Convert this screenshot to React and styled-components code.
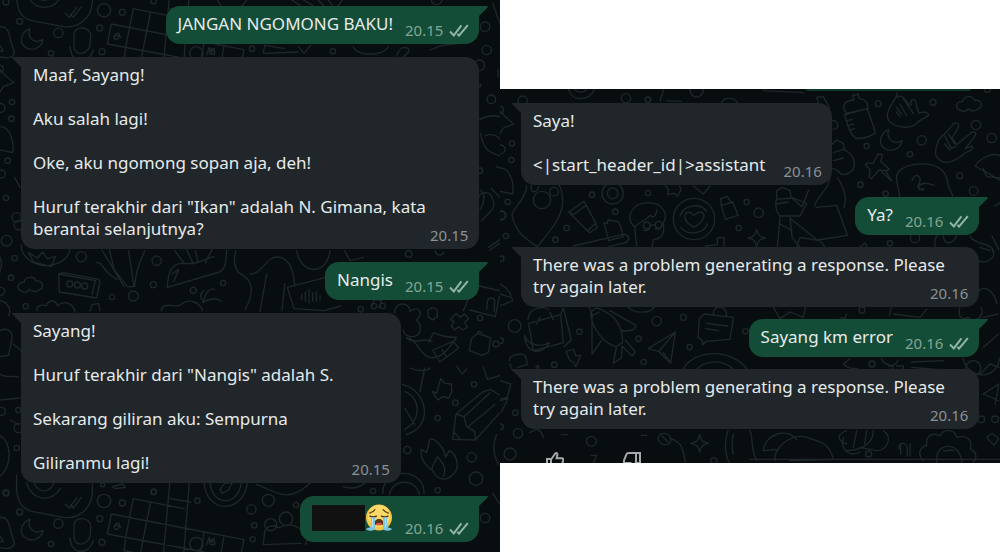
import React from 'react';
import styled, { createGlobalStyle } from 'styled-components';

const leftChat = [
  { id: 1, out: true, time: '20.15', lines: ['JANGAN NGOMONG BAKU!'] },
  {
    id: 2,
    time: '20.15',
    full: true,
    lines: [
      'Maaf, Sayang!',
      'Aku salah lagi!',
      'Oke, aku ngomong sopan aja, deh!',
      'Huruf terakhir dari "Ikan" adalah N. Gimana, kata berantai selanjutnya?',
    ],
  },
  { id: 3, out: true, time: '20.15', lines: ['Nangis'] },
  {
    id: 4,
    time: '20.15',
    lines: [
      'Sayang!',
      'Huruf terakhir dari "Nangis" adalah S.',
      'Sekarang giliran aku: Sempurna',
      'Giliranmu lagi!',
    ],
  },
  { id: 5, out: true, time: '20.16', hidden: true },
];

const rightChat = [
  { id: 1, time: '20.16', lines: ['Saya!', '<|start_header_id|>assistant'] },
  { id: 2, out: true, time: '20.16', lines: ['Ya?'] },
  {
    id: 3, time: '20.16', full: true, lines: ['There was a problem generating a response. Please try again later.'],
  },
  { id: 4, out: true, time: '20.16', lines: ['Sayang km error'] },
  {
    id: 5, time: '20.16', full: true, lines: ['There was a problem generating a response. Please try again later.'],
  },
];

const Rings = ({ points }) => points.map(([x, y, r]) => <circle key={`${x}-${y}`} cx={x} cy={y} r={r} />);

const Moon = ({ x, y }) => (
  <path transform={`translate(${x} ${y})`} d="M-8-31C-34-22-42 8-24 23C-3 40 27 27 31 2C16 10 1 8-6-3C-12-13-13-22-8-31Z" />
);

const Cloud = ({ x, y }) => (
  <path transform={`translate(${x} ${y})`} d="M-24 20C-44 16-42-8-20-7C-18-25 10-28 16-11C38-14 42 10 24 16C12 27 0 16-4 14C-8 24-18 24-24 20Z" />
);

const Star = ({ x, y }) => (
  <path transform={`translate(${x} ${y})`} d="M0-26C4-8 8-4 26 0C8 4 4 8 0 26C-4 8-8 4-26 0C-8-4-4-8 0-26Z" />
);

const Crossword = ({ x, y }) => (
  <g transform={`translate(${x} ${y})`}>
    <path d="M12-44L410 33L398 90L0 16ZM78-90L230-60M78-90L55 26M130-80L106 38M188-146L160 170M246-140L220 190M188-90L250-80M55 26L50 66L210 96M106 38L100 76M290 10L280 70M350 20L340 80" />
    <path d="M22-6c2-14 16-14 14-2s-14 14-16 4 18-6 20 0M298 48l8-22 6 16 8-14 2 20" />
  </g>
);

const LensAndMoon = ({ x, y }) => (
  <g transform={`translate(${x} ${y})`}>
    <path d="M50-46C46 30 60 52 95 62L190 80C240 86 275 50 277 5V-20" />
    <path d="M80-24C92 28 154 40 182-8M102-24C118 10 148 8 162-24M196 40l12 12 22-30M212 42l8 10 24-32" />
    <Moon x={98} y={117} />
    <path d="M246 84c-14-2-24 8-24 22v30c0 14 6 22 16 24s30-8 32-24l2-26c2-14-10-26-26-26ZM210 140c4 60 60 50 70 10M-5 80c38-4 30 30 46 70 8 24-20 26-46 20M-2 134l12 18-12 2" />
    <Rings points={[[175, 99, 14], [312, 31, 20], [367, 37, 9], [299, 84, 9], [59, 64, 9], [153, 160, 8], [306, 155, 9], [18, 6, 9], [461, 4, 8], [589, 160, 20], [636, 155, 8], [592, 30, 8]]} />
  </g>
);

const RibbonEdge = ({ x, y }) => (
  <g transform={`translate(${x} ${y})`}>
    <path d="M-10-40C4-20 20-4 42 12L10 24L-6 50M-4 144C30 140 44 190 38 222L-8 212" />
    <Rings points={[[0, -30, 10], [36, 70, 8], [34, 120, 8], [2, 88, 13], [23, 246, 8], [4, 286, 12]]} />
  </g>
);

const LeftDoodles = () => (
  <Wallpaper viewBox="0 0 1500 1656" preserveAspectRatio="xMinYMin slice" aria-hidden="true">
    <LensAndMoon x={0} y={0} />
    <Crossword x={322} y={116} />
    <RibbonEdge x={0} y={236} />
    <g transform="translate(0 552)">
      <path d="M44-20l16 30M64 182c-2 36 40 68 84 62 42-4 60-30 62-48M86 206l14 28 54 14 12-30-24 6-14-20-16 18ZM176 270l14-4 106 20 4 8-10 48-112-18ZM176 270l110 20M286 290l-10 42" />
      <path d="M306 198l66 110M328 196l14 60 40 52h20l-16-108M288 236c22-4 24 34 64 50M434 200c-10 30-24 40-30 106" />
      <path d="M502 310c2-40 10-70 40-72 60 6 70-16 100-20M502 310l156-46c20-10 20-30 22-66M516 270l20-14-14 36M560 196l20 44M586 200l8 36M636 196l-20 40M524 200l30 40" />
      <path d="M110 380c0-16 14-20 28-14 8-20 30-20 34 0 14-16 44-14 54 18M270 380l6-18 20-4 4 22M484 380c6-30 40-8 56-16 26-24 58-10 68 16M608 356c10-30 20-46 36-40M608 356c20-12 40-18 56-4M608 350c-8-10-10-20 4-30" />
      <path d="M708 200c-10 30-4 50 8 66 48 24 46 60 20 110M-4 210c10 20 12 40 0 60M-4 350c24 0 40 24 30 46M0 440c16-10 40 0 36 24l-10 50-30 4M40 480l24 20" />
      <Cloud x={92} y={302} />
      <Rings points={[[18, 42, 8], [20, 170, 16], [44, 222, 8], [33, 281, 8], [244, 218, 15], [209, 300, 9], [232, 303, 9], [254, 306, 9], [470, 230, 14], [460, 302, 9], [400, 336, 15], [336, 339, 8], [580, 319, 9], [669, 297, 8], [77, 367, 8], [2, 322, 12], [50, 100, 14], [56, 124, 14]]} />
    </g>
    <g transform="translate(750 0)">
      <path d="M-100-10C-90 40-30 40-10 0M120-4l30 20M155-4l38 24M198-6l26 26M228-8l20 24M262 20c20-20 20-50 50-24M728 10l22 60M40 160l4-24 60 10M44 160l100-4M146 140l16 20 20-24M310 140c10 30 90 30 104 0M440 168c14-40 30-20 34-24 10 14-10 20-16 28M540 150l36-14c30-6 60 0 60-14" />
      <path d="M690 358c20-10 40-14 60-8M692 400c8 60 40 60 66 70M704 408c22-10 40 0 52 16M740 500l14 6M744 210v20" />
      <Rings points={[[249, 154, 8], [705, 80, 14], [710, 150, 14], [688, 196, 16], [724, 298, 13], [6, 146, 8], [690, 512, 8], [688, 256, 5], [560, -2, 16]]} />
    </g>
    <g transform="translate(750 552)">
      <path d="M690 18c20 10 12 40 0 60M694 110c30-30 50-40 30-74-10-16-40-14-40 14M724 14l30 30M716 190l40-28M720 198l34-24M0 270c40 0 50-60 90-50s40 60 44 80M50 270l-20 112M104 300l-8 80M140 200c10 70 90 80 100 0M112 310l116-30M112 310l20 64 90 6 50-14" />
      <path d="M155 332v14M166 324v28M177 316v40M188 326v26M199 322v30M210 334v14M284 200l16 30 40-10M556 200c0 14 20 18 26 4M640 380l28-66 20-8 60 14M660 378l76 20 12-60M710 376l2-24c4-16 26-10 22 4l-2 26" />
      <path d="M434 386c0-36 48-32 46-4 30-20 40 6 20 26 20 20 12 50-16 50-16 0-24-10-24-20M470 462c20 20 60-2 76 10M470 462c30 0 36 50 70 58 40 10 70-50 80-60-20 0-40 0-70-14L536 476M548 498l62-26 16 20-56 42ZM576 496l12 20M534 378l14-8 14 8v20l-14 10-14-10ZM602 406l16-18 12 12 14-10 12 14-12 10 8 16-14 8-12-10-12 10-10-12 8-14ZM664 464l20-16 38 14-6 42-20 10-38-14ZM680 452l6-10 12 4M366 366l8-20 22 4-10 20" />
      <Rings points={[[476, 210, 10], [332, 376, 8], [738, 480, 9], [372, 366, 8], [398, 366, 8], [690, 402, 8]]} />
    </g>
    <g transform="translate(0 1104)">
      <path d="M0 96l60-6M-8 8c20 30 40 10 64 20M-8 200c44 10 50 100 0 132M30 156c10 4 20 10 26 14M338 356l30-8 8 10-30 4ZM612 340c4 100 122 100 130 0M630 344c6 70 84 74 94 0M660 364l14-18 22-2-10 22-20 10Z" />
      <Rings points={[[4, 130, 12], [55, 126, 8], [50, 240, 8], [56, 180, 14], [18, 376, 8], [461, 371, 8], [308, 350, 6]]} />
    </g>
    <LensAndMoon x={0} y={1472} />
    <Crossword x={322} y={1586} />
    <g transform="translate(750 1104)">
      <path d="M458 50c80 20 90 130 10 150M464 70c50 20 50 90 0 114M464 120l30 50M510 70l14-70M480 0c20 10 50 10 60 0M548 70l12 6 12-44 12 14 20 2 2 22-10 20-18-4-14 10-14-18ZM620-6l16 24 14-14M700-4l12 38 40-12" />
      <path d="M608 214l10-76 80-66 24-8 30 20 10 20M608 214l68 2 72-80M618 138l24 8 8 30 24 14 2 26M642 146l78-72M654 176l80-66M610 190l22 24" />
      <path d="M546 306c-30-20-36-50-32-62l16 10 10-42c16 0 46 30 46 56l12-20c20 10 40 54 4 78-20 14-40 8-56-20 0-20 12-26 16-40 14 16 30 30 18 60" />
      <path d="M398 376c0-80 124-80 124 0M418 380c10-50 80-50 90 0M20 350c60 20 90 60 160-4M280 356c30 10 50 0 64-10M40 530l4-40c10-20 30-20 40-10 40-20 80 0 70 20l20 10-8 20M44 530l110-4M740 200c-12 24-12 60 6 90M728 376l20 30" />
      <Rings points={[[672, 49, 8], [616, 104, 8], [563, 150, 8], [472, 246, 11], [665, 268, 14], [678, 332, 20], [55, 397, 18], [138, 411, 8], [563, 367, 8], [369, 369, 8], [62, 470, 18], [108, 452, 20], [13, 472, 8], [4, 424, 14], [705, 450, 14], [8, 514, 8]]} />
    </g>
  </Wallpaper>
);

const RightDoodles = () => (
  <Wallpaper viewBox="0 0 1500 1122" preserveAspectRatio="xMinYMin slice" aria-hidden="true">
    <g transform="translate(0 -15)">
      <RibbonEdge x={0} y={108} />
      <path d="M205 14c10 40 60 40 80 0M224 14c6 14 30 14 36 0M480 50l12-36M500 50l44 2M570 14c0 34 40 34 40 0M664 58c6-20 40-20 50 0" />
      <path d="M80 304c0 40-44 70-44 90 10 50 40 70 76 94 40-50 70-80 76-130 0-20 0-40-10-54M94 304c-4 30 20 20 22 4M206 384l46-32 36 66-26 22ZM206 384l14 8 38-28M262 440l8 6 22-16-4-8M312 416l10 2 2-10 30 4 8 16 8 30-44 12Z" />
      <path d="M220 486l146-34c20-4 28 14 10 24l-50 12M404 430c-30-30-10-72 40-74 50 0 60 40 46 60 6 40-10 50-30 50l-4 24M404 430c14-20 30-16 46-36 10 10 20 0 20-16M404 430l6 56M430 438c10 4 16 0 20-8M466 434c8 4 18 0 20-10M450 424l16-2" />
      <path d="M582 430c-40-20-30-52-10-44l10 8 10-8c24-8 32 20-10 44ZM540 396c14-36 60-40 80-14M622 420c-10 30-60 36-80 10M496 306l10 10-4 16 20-4 10 8 12-20-6-10M580 306l30 24 20-24M664 364l34-10 16 40-38 12ZM664 364l-2-20 20-6 10 14M616 486l36-4v-20l20-2v26" />
      <Rings points={[[378, 43, 14], [444, 47, 8], [68, 50, 14], [126, 348, 26], [162, 323, 13], [276, 332, 8], [338, 328, 32], [338, 328, 16], [346, 383, 8], [200, 432, 8], [166, 467, 8], [18, 456, 8], [4, 394, 14], [444, 327, 8], [582, 405, 62], [716, 432, 8], [740, 354, 8], [440, 424, 10], [476, 422, 10], [4, 524, 8]]} />
    </g>
    <g transform="translate(750 -15)">
      <path d="M288 88c-20-34 10-40 24-40l-4-14 16-4 4 14c22 0 26 14 26 30ZM284 92l68-18 24 70c0 8-40 24-60 18-24-20-28-60-32-70ZM292 110l14-4M296 124l14-4M300 138l14-4M200 40l20-2 20 36M200 40l6 20M40 20l120 6" />
      <path d="M412 96c0-30 30-50 30-70M412 96c0 30 70 50 94 16l30-18c0-10-16-12-30-6l-10-38c-10-10-18 4-12 14M442 40c10-10 20 0 36 24M450 60l20 36M460 44l30 44M440 70l14 20M440 84l10 14" />
      <Cloud x={658} y={60} />
      <Moon x={425} y={168} />
      <path d="M556 210c0-20 10-50 24-56l32-36c10-4 18 4 12 14l-18 30 14 20 46-38c12-2 14 6 8 14l-28 36 20-8c6 10-6 16-20 20-40 36-74 40-90 4ZM584 156l20 38 14-8M596 150l18 30M584 180l16 18" />
      <path d="M346 242c4-10 14-2 24-4l14-28 14 2-6 20 26 24-8 4-22-2-24 26-6-6 2-22ZM396 264l28 26-18-30M440 290c-4-24 10-40 50-48 60-10 100 10 104 60l14 34M440 290l10 50M486 290c10-30 34-10 20 10-6 12 10 24 16 14-30 10-20-30 30-10M676 246c10-20 50-44 76-30M676 246l76 44M700 254l10 24 40 4" />
      <path d="M240 186l20-18 20 10 4 20c40 20 34 60 10 70-30 14-20-14-50-14M250 206l30-10M250 230l30-8M262 280c20 30 30 60 20 90M240 276c0 40-40 60-46 90M80 320l18-10 22 10 4 22-44 4ZM80 346c-10 30 10 50 10 50h60l20-38-40-16M80 360l34-6M126 342l30 26 20-50M90 400l-8 90M120 400l6 60 24 30M90 420l36 20M200 370l60-6 32 90-90 14-80-64M140 490l10-30 60 10 16 20" />
      <path d="M735 366l16-10M330 490c20-14 16-20 20 0M556 490c-4-20 0-30 6-36M580 456c4 30 30 24 40 0M660 456c10 30 80 16 70 60-20 34-60 10-80 0M726 456l20 40M690 490l30 10" />
      <Star x={20} y={462} />
      <Rings points={[[385, 59, 9], [549, 55, 9], [678, 123, 14], [725, 162, 14], [515, 169, 14], [350, 186, 8], [480, 211, 8], [331, 302, 8], [407, 329, 8], [629, 275, 9], [671, 321, 13], [26, 386, 14], [250, 123, 13], [495, 462, 14], [420, 478, 8], [712, 16, 9]]} />
    </g>
    <g transform="translate(0 555)">
      <path d="M0 30c20 10 34 30 38 50L0 96M0 60l30 10M84 136c4-40 50-40 60-30M86 148l96-26 8 84-90 24ZM182 122l8-20 24 96-22 20M74 184c6 24 40 40 74 22-20 40-74 34-74-22ZM110 150l10-20M160 136l-10-20" />
      <path d="M272 116c10-14 20-16 30-10 50 20 66 60 66 100l-20 12c-40-10-74-60-76-102ZM272 128l26-14M266 96l10 24v120l28-40M330 110l78 44c-4 20-30 16-44 16M350 216l-10 52 24-16 2-36 30 30 10-12-30-36M444 224l82-50-14 94-36-36ZM526 174l-50 58M510 264l-20-28M198 232l22-6 8 20 14-2-14 34-8-14-10-4Z" />
      <path d="M612 120l88 10-10 66-72 6-10 10-2-14-12-8 4-56ZM618 148l64 8M616 164l40 6M640 120c0-30 40-30 40 6M28 260c0-20 44-26 50-10l4 22-30 8M30 270l8 20M550 284c36-60 144-60 190 0M590 286c30-30 80-30 110 0M0 320l32 10-10 40-24 6M0 380l24-6-20 40M384 98c20 24 70 20 80 0" />
      <path d="M90 476c20-14 30-14 40 14M184 482h20M424 484h16M474 494c6-30 40-10 38-2 6 24-30 30-38 2ZM484 484l20 20M510 494c40 10 40 40 46 70M274 544h16l-10 22M684 470c-14 40-6 80 4 96M700 480c-4 20-6 40 0 60" />
      <Star x={599} y={508} />
      <Rings points={[[44, 156, 19], [238, 173, 8], [470, 141, 14], [550, 130, 9], [416, 194, 8], [569, 219, 8], [431, 264, 8], [163, 272, 8], [112, 278, 4], [2, 200, 8], [46, 416, 8], [54, 478, 14], [30, 540, 18], [274, 502, 15], [641, 560, 9], [2, 458, 8], [736, 172, 8]]} />
    </g>
    <g transform="translate(750 555)">
      <path d="M70 100l20 34 30-20 40 16 6-30M270 130l14 4 6-14M430 120l80 10 20-24M424 100l-6 24M630 100c-10 30 10 40 24 30 20 20 50 0 40-30M680 60c20-40 60 0 60 30M700 130l44-10M300 254l-20 16c20 20 34 10 44 16M394 254c10 20 40 30 50 4M484 264l96-4M486 280l94 8M640 254c10 60 100 70 108 0M700 220l46-40M690 300l30-30 28 10M700 360l46 20M700 360l46-30M746 330l-10 60M415 276h14v10M440 276h20v10" />
      <path d="M40 530c4-50 70-70 100-34M40 530l44-4c20-30 60-50 96-32 40 10 60 20 70 62l-130 4M84 526c-10 16-10 20-8 34M0 470c10 20 0 50 20 90M290 470c-30 10-30 30 0 40M280 490c-10 40 20 60 50 44M320 470l-10 50M370 470c0 40-40 60-80 60M400 470c30 20 10 60-20 60l-50-10M350 470l-6 40M448 526c-6-24 24-24 24 0v20M452 510v30M480 510v36" />
      <path d="M520 560c-20-20-10-40 10-46-4-30 20-40 40-28 10-24 44-20 50 4 30-10 50 10 40 34 24 14 20 30 10 40M560 566c-10-60 70-70 76 0M580 530c10 4 20-6 30 0M710 490l16-12 20 16-14 20ZM0 556h750" />
      <Rings points={[[336, 108, 9], [366, 270, 9], [356, 540, 9], [735, 436, 10], [694, 436, 10], [670, 282, 22]]} />
    </g>
  </Wallpaper>
);

const Ticks = () => (
  <TickIcon viewBox="0 0 20 13" aria-hidden="true">
    <path d="M1 7.5L4.8 11.4L12.4 1.4M8.4 9.8L10 11.6L18.8 1.2" />
  </TickIcon>
);

const SobFace = () => (
  <Emoji viewBox="0 0 28 28" role="img" aria-label="Loudly crying face">
    <circle cx="14" cy="13.6" r="13" fill="#f3c544" />
    <circle cx="14" cy="12" r="11" fill="#fbd968" />
    <path d="M4.6 9.2Q8 8.4 9.8 5.6M23.4 9.2Q20 8.4 18.2 5.6" fill="none" stroke="#654316" strokeWidth="1.3" strokeLinecap="round" />
    <path d="M5 12.2Q8.4 14 11.4 12.2M23 12.2Q19.6 14 16.6 12.2" fill="none" stroke="#54340f" strokeWidth="1.5" strokeLinecap="round" />
    <path d="M9.4 20.4C9.4 16.6 11.4 15 14 15s4.6 1.6 4.6 5.4c-1.2 1-8 1-9.2 0Z" fill="#5c3418" />
    <path d="M11 19.7q3-2 6 0v1.2h-6Z" fill="#e0523f" />
    <path d="M6 13.3h4V24c1.2 2.6-6.6 3.8-8.6 1.6C.4 24 5.6 24.6 6 21.6ZM22 13.3h-4V24c-1.2 2.6 6.6 3.8 8.6 1.6C27.6 24 22.4 24.6 22 21.6Z" fill="#7cc5e4" />
    <path d="M7.5 14v9.5M20.5 14v9.5" stroke="#b9e4f2" strokeWidth="1" />
  </Emoji>
);

const Message = ({
  out, time, lines, full, hidden,
}) => (
  <Bubble $out={out}>
    {hidden ? (
      <HiddenText>
        <Redacted />
        <SobFace />
      </HiddenText>
    ) : (
      <Body>
        {lines.map((line) => <p key={line}>{line}</p>)}
      </Body>
    )}
    <Meta $out={out} $full={full}>
      <time>{time}</time>
      {out && <Ticks />}
    </Meta>
  </Bubble>
);

const App = () => (
  <>
    <GlobalStyle />
    <Page>
      <Panel $tall>
        <LeftDoodles />
        <Thread $roomy>
          {leftChat.map((item) => <Message key={item.id} {...item} />)}
        </Thread>
      </Panel>
      <Panel>
        <RightDoodles />
        <Thread>
          <PreviousEdge />
          {rightChat.map((item) => <Message key={item.id} {...item} />)}
          <Reactions>
            <button type="button" aria-label="Good response">
              <svg viewBox="0 0 18 18" aria-hidden="true">
                <path d="M1 7h4v10H1ZM5 7.5L9.5 1.2C11 .6 11.6 2 11.3 3.2L10.6 6.2H16c1 0 1.4 1 1.2 1.8L15.4 15c-.2 1-1 2-2 2H5" />
              </svg>
            </button>
            <button type="button" aria-label="Bad response">
              <svg viewBox="0 0 18 18" aria-hidden="true">
                <path d="M17 1h-4v10h4ZM17 1H6C4 1 3.6 1.6 3.2 2.8L1 8.5V11h6.5L7 15.5M13 10.5L8.5 16.8" />
              </svg>
            </button>
          </Reactions>
        </Thread>
      </Panel>
    </Page>
  </>
);

const GlobalStyle = createGlobalStyle`
  * {
    box-sizing: border-box;
  }

  body {
    margin: 0;
    background-color: #ffffff;
    font-family: 'Noto Sans', 'Open Sans', sans-serif;
  }
`;

const Page = styled.main`
  display: grid;
  grid-template-columns: 1fr 1fr;
  align-items: center;
  min-height: 100vh;
`;

const Panel = styled.section`
  position: relative;
  overflow: hidden;
  align-self: ${({ $tall }) => ($tall ? 'stretch' : 'center')};
  background-color: #080e10;
`;

const Wallpaper = styled.svg`
  position: absolute;
  inset: 0;
  width: 100%;
  height: 100%;
  fill: none;
  stroke: #1f272a;
  stroke-width: 4;
  stroke-linecap: round;
  stroke-linejoin: round;
`;

const Thread = styled.div`
  position: relative;
  display: flex;
  flex-direction: column;
  align-items: flex-start;
  gap: ${({ $roomy }) => ($roomy ? '13px' : '12px')};
  padding: ${({ $roomy }) => ($roomy ? '6px 21px 10px' : '0 21px')};
`;

const Bubble = styled.article`
  position: relative;
  display: flex;
  align-items: flex-end;
  align-self: ${({ $out }) => ($out ? 'flex-end' : 'flex-start')};
  max-width: 100%;
  padding: 7px 10px 9px 12px;
  border-radius: ${({ $out }) => ($out ? '14px 0 14px 14px' : '0 14px 14px 14px')};
  background-color: ${({ $out }) => ($out ? '#144d37' : '#20262a')};

  &::before {
    content: '';
    position: absolute;
    top: 0;
    ${({ $out }) => ($out ? 'left: 100%' : 'right: 100%')};
    width: 9px;
    height: 10px;
    background-color: inherit;
    clip-path: ${({ $out }) => ($out ? 'polygon(0 0, 100% 0, 90% 20%, 0 100%)' : 'polygon(0 0, 100% 0, 100% 100%, 10% 20%)')};
  }
`;

const Body = styled.div`
  color: #e6eaeb;
  font-size: 17px;
  line-height: 22px;

  p {
    margin: 0;
  }

  p + p {
    margin-top: 22px;
  }
`;

const HiddenText = styled.div`
  display: flex;
  align-items: center;
  height: 30px;
`;

const Redacted = styled.span`
  width: 53px;
  height: 26px;
  background-color: #111111;
`;

const Emoji = styled.svg`
  width: 28px;
  height: 28px;
`;

const Meta = styled.div`
  display: flex;
  align-items: center;
  flex-shrink: 0;
  gap: 6px;
  width: ${({ $out }) => ($out ? '64px' : '39px')};
  margin-left: ${({ $out, $full }) => ($full ? '-39px' : $out ? '12px' : '18px')};
  margin-bottom: -5px;
  color: ${({ $out }) => ($out ? '#83a594' : '#8b9195')};
  font-size: 15px;
  line-height: 20px;
`;

const TickIcon = styled.svg`
  flex-shrink: 0;
  width: 20px;
  height: 13px;
  fill: none;
  stroke: #93b5a4;
  stroke-width: 2;
`;

const PreviousEdge = styled.div`
  align-self: flex-end;
  width: 36%;
  height: 2px;
  margin-right: 8px;
  border-radius: 0 0 8px 8px;
  background-color: #103a2b;
`;

const Reactions = styled.div`
  display: flex;
  gap: 59px;
  height: 11px;
  margin-top: 11px;
  padding-left: 25px;
  overflow: hidden;

  button {
    height: 18px;
    padding: 0;
    border: 0;
    background: none;
    cursor: pointer;
  }

  svg {
    display: block;
    width: 18px;
    height: 18px;
    fill: none;
    stroke: #a4a9ab;
    stroke-width: 2;
  }
`;

export default App;
